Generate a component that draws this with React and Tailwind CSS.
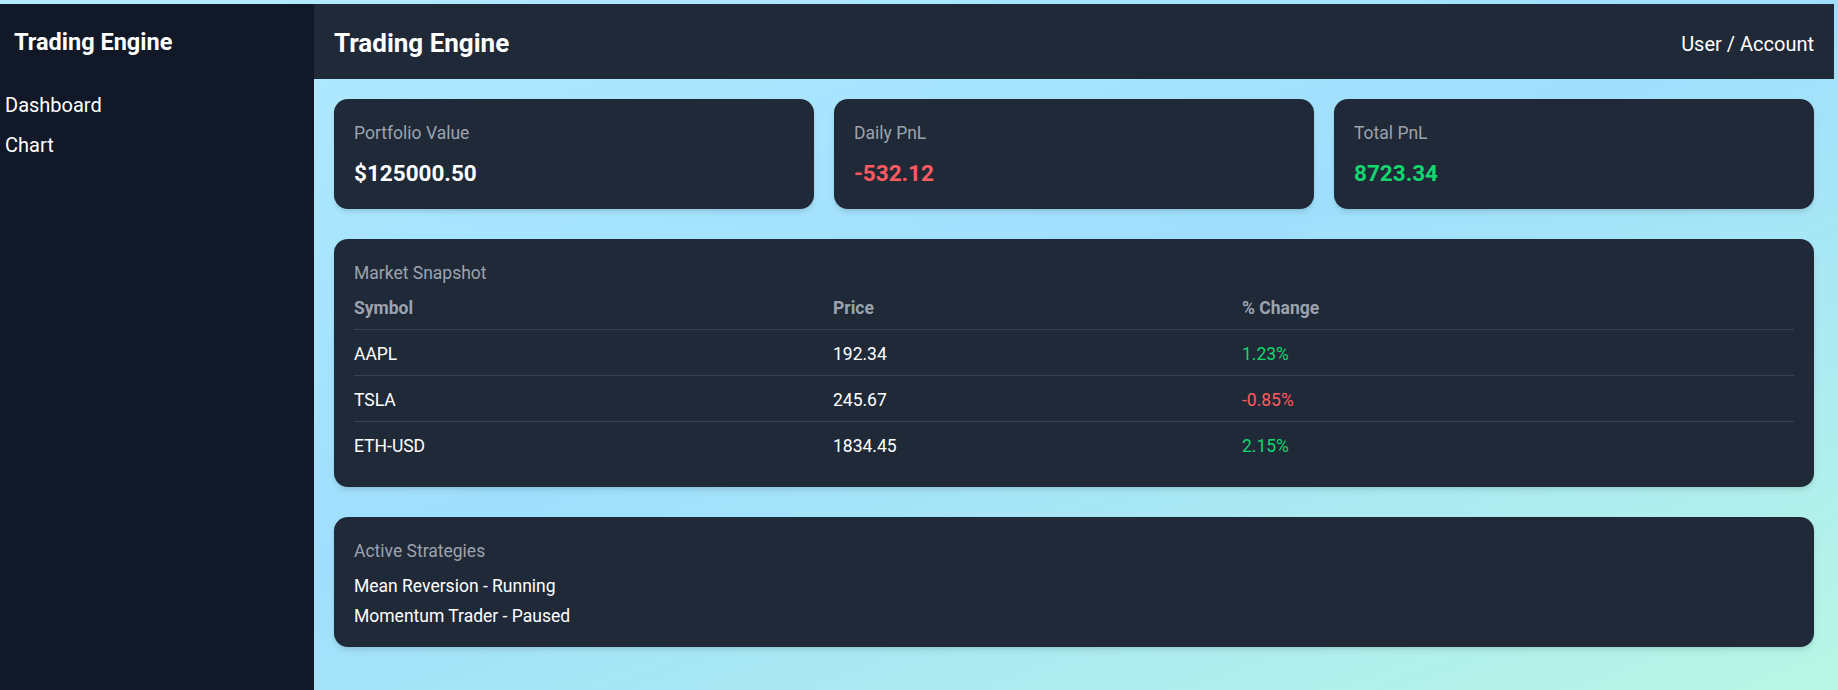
export default function App() {
  const rows = [
    { s: "AAPL", p: "192.34", c: "1.23%", up: true },
    { s: "TSLA", p: "245.67", c: "-0.85%", up: false },
    { s: "ETH-USD", p: "1834.45", c: "2.15%", up: true },
  ];
  return (
    <div
      className="min-h-screen w-full bg-gradient-to-br from-[#b4ecff] via-[#9fdffd] to-[#b8f6e4] pt-[4px] pr-[4px] flex text-white"
      style={{ fontFamily: "Roboto, 'Noto Sans', sans-serif" }}
    >
      <aside className="w-[314px] shrink-0 bg-[#111827] min-h-[686px]">
        <div className="pl-[14px] pt-[21px] text-[23.5px] leading-[35px] font-bold">Trading Engine</div>
        <nav className="mt-[25px] pl-[5px] text-[20px]">
          <div className="py-[5px] leading-[30px]">Dashboard</div>
          <div className="py-[5px] leading-[30px]">Chart</div>
        </nav>
      </aside>
      <main className="flex-1 flex flex-col">
        <header className="h-[75px] bg-[#1f2937] flex items-center justify-between px-[20px] pt-[4px]">
          <div className="text-[26px] font-bold leading-[35px]">Trading Engine</div>
          <div className="text-[20px] leading-[30px]">User / Account</div>
        </header>
        <div className="p-[20px] flex flex-col gap-[30px]">
          <div className="grid grid-cols-3 gap-[20px]">
            {[
              { l: "Portfolio Value", v: "$125000.50", c: "text-white" },
              { l: "Daily PnL", v: "-532.12", c: "text-[#ff5a5f]" },
              { l: "Total PnL", v: "8723.34", c: "text-[#12d66e]" },
            ].map((x) => (
              <div key={x.l} className="bg-[#1f2937] rounded-[14px] px-[20px] pt-[22px] pb-[18px] shadow-md">
                <div className="text-[17.5px] leading-[25px] text-[#9ca3af]">{x.l}</div>
                <div className={`mt-[10px] text-[22.5px] leading-[35px] font-bold ${x.c}`}>{x.v}</div>
              </div>
            ))}
          </div>
          <div className="bg-[#1f2937] rounded-[14px] px-[20px] pt-[22px] pb-[20px] shadow-md">
            <div className="text-[17.5px] leading-[25px] text-[#9ca3af]">Market Snapshot</div>
            <table className="w-full text-left text-[17.5px] leading-[25px] border-collapse">
              <thead>
                <tr className="border-b border-[#374151]">
                  <th className="w-[479px] pt-[10px] pb-[8px] font-bold text-[#9ca3af]">Symbol</th>
                  <th className="w-[409px] pt-[10px] pb-[8px] font-bold text-[#9ca3af]">Price</th>
                  <th className="pt-[10px] pb-[8px] font-bold text-[#9ca3af]">% Change</th>
                </tr>
              </thead>
              <tbody>
                {rows.map((r, i) => (
                  <tr key={r.s} className={i < rows.length - 1 ? "border-b border-[#374151]" : ""}>
                    <td className="pt-[12px] pb-[8px]">{r.s}</td>
                    <td className="pt-[12px] pb-[8px]">{r.p}</td>
                    <td className={`pt-[12px] pb-[8px] ${r.up ? "text-[#12d66e]" : "text-[#ff5a5f]"}`}>{r.c}</td>
                  </tr>
                ))}
              </tbody>
            </table>
          </div>
          <div className="bg-[#1f2937] rounded-[14px] px-[20px] pt-[22px] pb-[18px] shadow-md">
            <div className="text-[17.5px] leading-[25px] text-[#9ca3af]">Active Strategies</div>
            <div className="mt-[10px] flex flex-col gap-[5px] text-[17.5px] leading-[25px]">
              <div>Mean Reversion - Running</div>
              <div>Momentum Trader - Paused</div>
            </div>
          </div>
        </div>
      </main>
    </div>
  );
}
